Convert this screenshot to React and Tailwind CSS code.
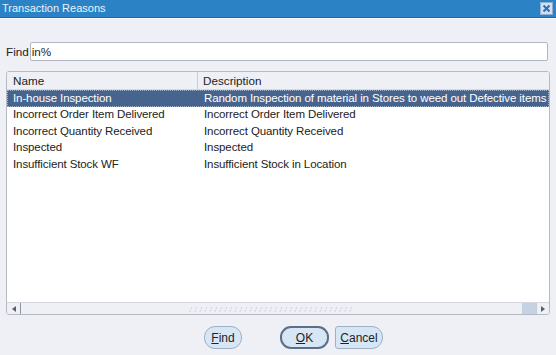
import React from "react";

const rows = [
  ["In-house Inspection", "Random Inspection of material in Stores to weed out Defective items"],
  ["Incorrect Order Item Delivered", "Incorrect Order Item Delivered"],
  ["Incorrect Quantity Received", "Incorrect Quantity Received"],
  ["Inspected", "Inspected"],
  ["Insufficient Stock WF", "Insufficient Stock in Location"],
];

const Btn = ({ children, strong, className = "" }) => (
  <button
    className={`h-[23px] rounded-[11px] bg-[#d7e6f5] text-[12px] text-[#222] ${
      strong ? "border-2 border-[#5d6f86]" : "border border-[#9fb0c4]"
    } ${className}`}
  >
    {children}
  </button>
);

export default function App() {
  return (
    <div
      className="w-[556px] h-[355px] bg-[#eef0f6] flex flex-col overflow-hidden"
      style={{ fontFamily: '"Liberation Sans", Arial, sans-serif' }}
    >
      {/* Title bar */}
      <div className="h-[18px] bg-[#2b83c6] border-b border-[#1d6aa6] flex items-center justify-between pl-[2px] pr-[3px]">
        <span className="text-[11px] text-[#eaf3fb] leading-none">Transaction Reasons</span>
        <div className="w-[13px] h-[13px] bg-[#cfe0f2] border border-[#8fb0d4] flex items-center justify-center">
          <svg width="9" height="9" viewBox="0 0 9 9">
            <path d="M1.5 1.5 L7.5 7.5 M7.5 1.5 L1.5 7.5" stroke="#2f6fae" strokeWidth="2" />
          </svg>
        </div>
      </div>
      <div className="h-[1px] bg-[#f7f8fc]" />

      {/* Find field */}
      <div className="flex items-center mt-[23px] pl-[6px] pr-[8px]">
        <span className="text-[11.7px] text-[#222]">Find</span>
        <div className="flex-1 h-[19px] ml-[1px] bg-white border border-[#b3b7c2] rounded-[2px] flex items-center pl-[1px] text-[11.7px] text-[#222]">
          in%
        </div>
      </div>

      {/* List */}
      <div className="mt-[10px] mx-[6px] h-[244px] border border-[#b7bac4] rounded-[3px] bg-white flex flex-col overflow-hidden">
        <div className="h-[18px] shrink-0 flex bg-[#eef0f6] border-b border-[#d6d8e0] text-[11.7px] text-[#222]">
          <div className="w-[191px] shrink-0 pl-[6px] border-r border-[#c9ccd6] flex items-center pt-[1px]">Name</div>
          <div className="pl-[5px] flex items-center pt-[1px]">Description</div>
        </div>
        <div className="flex-1">
          {rows.map(([n, d], i) => (
            <div
              key={n}
              className={`h-[16.6px] flex items-center text-[11.5px] tracking-[-0.1px] whitespace-nowrap ${
                i === 0 ? "bg-[#47648e] text-white outline-1 outline-dotted outline-[#9fb1c9] -outline-offset-1" : "text-[#222]"
              }`}
            >
              <div className="w-[192px] shrink-0 pl-[6px]">{n}</div>
              <div className="pl-[5px]">{d}</div>
            </div>
          ))}
        </div>
        {/* Horizontal scrollbar */}
        <div className="h-[12px] shrink-0 flex bg-[#eef0f6] border-t border-[#d6d8e0]">
          <div className="w-[14px] border-r border-[#8c96a6] flex items-center justify-center">
            <svg width="4" height="6" viewBox="0 0 4 6"><path d="M4 0 L0 3 L4 6Z" fill="#55606e" /></svg>
          </div>
          <div className="flex-1 flex items-center justify-center">
            <svg width="166" height="6" viewBox="0 0 166 6">
              {Array.from({ length: 33 }).map((_, k) => (
                <path key={k} d={`M${k * 5 + 1} 5.5 L${k * 5 + 3} 0.5`} stroke="#c2c6d0" strokeWidth="1" strokeDasharray="1.5 1.5" />
              ))}
            </svg>
          </div>
          <div className="w-[14px] bg-[#c4d2e4]" />
          <div className="w-[13px] border-l border-[#c7cbd4] flex items-center justify-center">
            <svg width="4" height="6" viewBox="0 0 4 6"><path d="M0 0 L4 3 L0 6Z" fill="#55606e" /></svg>
          </div>
        </div>
      </div>

      {/* Buttons */}
      <div className="flex mt-[11px] pl-[204px]">
        <Btn className="w-[38px]"><span className="underline">F</span>ind</Btn>
        <Btn strong className="w-[49px] ml-[38px]"><span className="underline">O</span>K</Btn>
        <Btn className="w-[48px] ml-[6px] rounded-l-[3px]"><span className="underline">C</span>ancel</Btn>
      </div>
    </div>
  );
}
